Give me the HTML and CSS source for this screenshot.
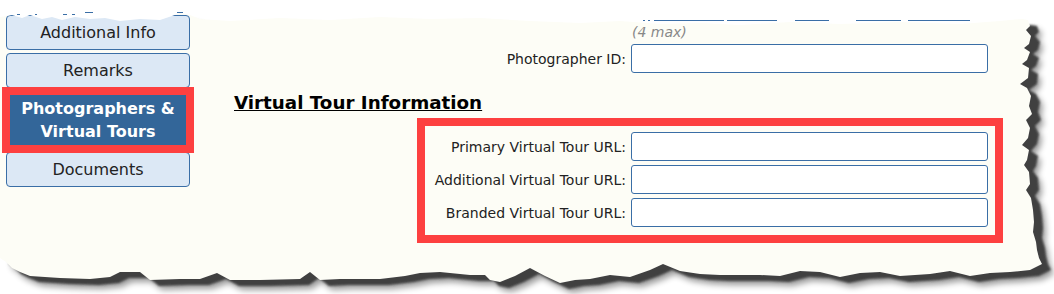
FILE: index.html
```html
<!DOCTYPE html>
<html>
<head>
<meta charset="utf-8">
<link rel="stylesheet" href="styles.css">
</head>
<body>
<div class="paper">
  <nav class="side">
    <a class="tab">Additional Info</a>
    <a class="tab">Remarks</a>
    <a class="tab active">Photographers &amp;<br>Virtual Tours</a>
    <a class="tab">Documents</a>
  </nav>
  <main class="main">
    <div class="row row-plain note-row"><span class="note">(4 max)</span></div>
    <div class="row row-plain photog"><label>Photographer ID:</label><span class="field"></span></div>
    <h2 class="heading">Virtual Tour Information</h2>
    <div class="vt-box">
      <div class="row"><label>Primary Virtual Tour URL:</label><span class="field"></span></div>
      <div class="row"><label>Additional Virtual Tour URL:</label><span class="field"></span></div>
      <div class="row"><label>Branded Virtual Tour URL:</label><span class="field"></span></div>
    </div>
  </main>
  <svg class="tear" width="1054" height="294" viewBox="0 0 1054 294">
    <defs>
      <path id="paperShape" d="M0 17L12 15L22 18L30 15L42 19L52 17L62 20L75 17L90 19L105 18L120 21L140 19L160 20L172 16L180 13L190 15L200 19L230 21L280 18L330 20L380 17L430 19L480 18L530 21L580 23L620 21L660 24L700 23L740 25L790 22L840 24L900 22L960 24L1000 21L1022 19L1028 20L1030 26L1026 30L1031 36L1029 44L1024 48L1030 52L1027 60L1022 64L1029 68L1028 78L1020 84L1027 88L1031 96L1029 106L1032 114L1026 120L1030 128L1028 138L1022 145L1029 150L1027 160L1024 165L1029 172L1030 184L1026 190L1031 198L1033 210L1034 222L1033 232L1036 242L1037 250L1039 258L1042 264L1030 270L1010 272L990 273L970 276L950 271L930 274L900 276L880 272L860 273L840 277L820 272L800 271L780 276L760 275L740 275L720 275L700 274L680 271L663 264L650 270L630 277L610 275L590 279L575 280L560 283L545 276L530 268L515 276L500 282L490 280L485 275L470 275L440 272L420 273L405 276L380 279L340 279L320 280L310 272L300 279L260 280L230 280L217 273L200 279L180 279L150 280L140 272L120 272L110 277L90 279L60 278L30 276L20 272L12 268L6 262L0 258Z"/>
      <mask id="outside" maskUnits="userSpaceOnUse" x="0" y="0" width="1054" height="294">
        <rect width="1054" height="294" fill="#fff"/>
        <use href="#paperShape" fill="#000"/>
      </mask>
      <filter id="blurSoft" x="-5%" y="-10%" width="110%" height="120%"><feGaussianBlur stdDeviation="3"/></filter>
      <filter id="blurHard" x="-5%" y="-10%" width="110%" height="120%"><feGaussianBlur stdDeviation="0.9"/></filter>
    </defs>
    <path fill="#fff" fill-rule="evenodd" d="M0 0H1054V294H0Z M0 17L12 15L22 18L30 15L42 19L52 17L62 20L75 17L90 19L105 18L120 21L140 19L160 20L172 16L180 13L190 15L200 19L230 21L280 18L330 20L380 17L430 19L480 18L530 21L580 23L620 21L660 24L700 23L740 25L790 22L840 24L900 22L960 24L1000 21L1022 19L1028 20L1030 26L1026 30L1031 36L1029 44L1024 48L1030 52L1027 60L1022 64L1029 68L1028 78L1020 84L1027 88L1031 96L1029 106L1032 114L1026 120L1030 128L1028 138L1022 145L1029 150L1027 160L1024 165L1029 172L1030 184L1026 190L1031 198L1033 210L1034 222L1033 232L1036 242L1037 250L1039 258L1042 264L1030 270L1010 272L990 273L970 276L950 271L930 274L900 276L880 272L860 273L840 277L820 272L800 271L780 276L760 275L740 275L720 275L700 274L680 271L663 264L650 270L630 277L610 275L590 279L575 280L560 283L545 276L530 268L515 276L500 282L490 280L485 275L470 275L440 272L420 273L405 276L380 279L340 279L320 280L310 272L300 279L260 280L230 280L217 273L200 279L180 279L150 280L140 272L120 272L110 277L90 279L60 278L30 276L20 272L12 268L6 262L0 258Z"/>
    <g mask="url(#outside)">
      <use href="#paperShape" transform="translate(12 10)" fill="#000" opacity="0.4" filter="url(#blurSoft)"/>
      <use href="#paperShape" transform="translate(9 6)" fill="#404040" filter="url(#blurHard)"/>
    </g>
    <g stroke="#3a6ea6" stroke-width="1">
      <path d="M643 20.5H645M648 20.5H650M654 20.5H724M727 20.5H777M795 20.5H829M856 20.5H901M908 20.5H970"/>
      <path d="M17 14.5H20M35 14.5H37M63 14.5H67M72 14.5H75M85 12.5H93M177 12.5H183"/>
    </g>
  </svg>
</div>
</body>
</html>
```

FILE: styles.css
```css
body {
  margin: 0;
  background: #ffffff;
  font-family: "DejaVu Sans", Verdana, sans-serif;
}

.paper {
  position: relative;
  width: 1054px;
  height: 294px;
  box-sizing: border-box;
  padding: 15px 0 0 6px;
  background: #fdfdf6;
  display: flex;
  overflow: hidden;
}

.side {
  width: 184px;
  flex: none;
  display: flex;
  flex-direction: column;
  gap: 3px;
}

.tab {
  height: 35px;
  box-sizing: border-box;
  border: 1px solid #3a6ea6;
  border-radius: 4px;
  background: #dce8f5;
  color: #222;
  font-size: 16px;
  display: flex;
  align-items: center;
  justify-content: center;
  text-align: center;
}

.tab.active {
  position: relative;
  z-index: 1;
  height: 58px;
  background: #336699;
  border-color: #336699;
  border-radius: 0;
  color: #fff;
  font-weight: bold;
  line-height: 23px;
  outline: 8px solid #fd4040;
  outline-offset: -4px;
}

.main {
  flex: 1;
  padding: 9px 51px 0 0;
  display: flex;
  flex-direction: column;
}

.row {
  display: flex;
  justify-content: flex-end;
  align-items: center;
  gap: 5px;
}

.row label {
  font-size: 14px;
  color: #222;
}

.row-plain {
  padding-right: 15px;
}

.note-row {
  height: 17px;
}

.note {
  width: 357px;
  box-sizing: border-box;
  padding-left: 1px;
  font-size: 14px;
  line-height: 17px;
  font-style: italic;
  color: #888;
}

.photog {
  margin-top: 3px;
}

.field {
  width: 357px;
  height: 29px;
  box-sizing: border-box;
  border: 1px solid #3a6ea6;
  border-radius: 3px;
  background: #fff;
}

.heading {
  margin: 18px 0 4px 44px;
  font-size: 18.3px;
  line-height: 23px;
  font-weight: bold;
  text-decoration: underline;
  color: #000;
}

.vt-box {
  margin-left: 227px;
  border: 8px solid #fd4040;
  padding: 6px 7px 8px 0;
  display: flex;
  flex-direction: column;
  gap: 4px;
}

.tear {
  position: absolute;
  top: 0;
  left: 0;
  pointer-events: none;
  z-index: 2;
}
```
